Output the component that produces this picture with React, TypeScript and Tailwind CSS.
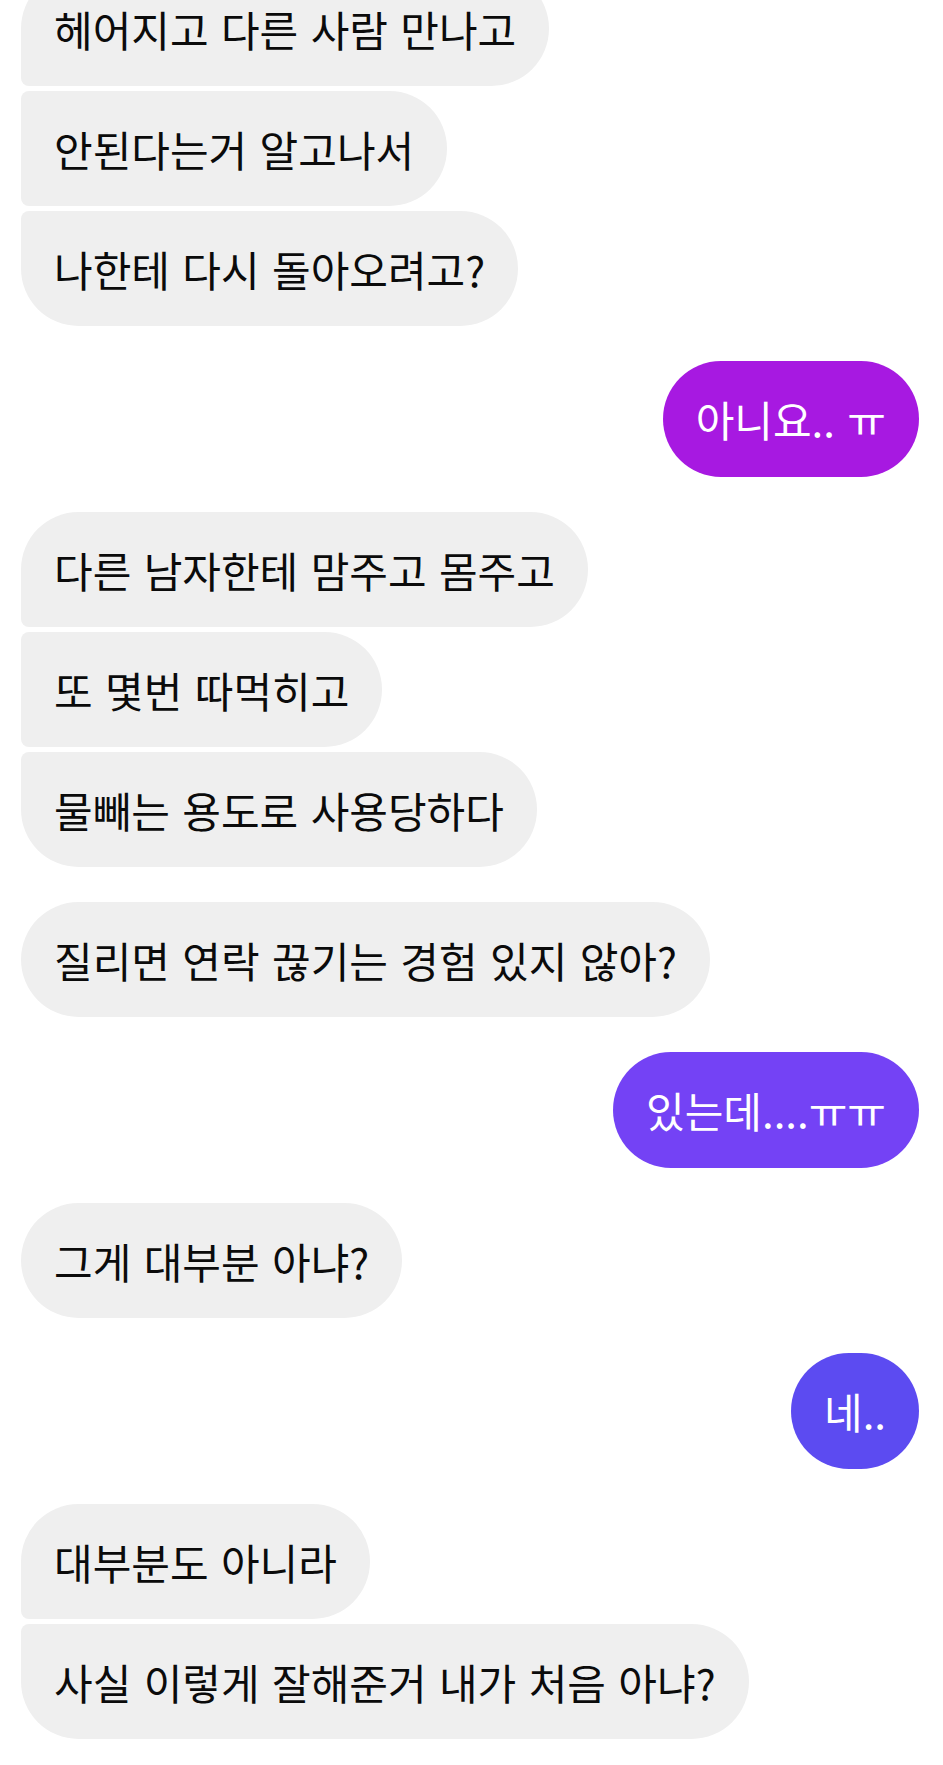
type Pos = "first" | "middle" | "last" | "single";

type Msg = { text: string; mine?: boolean; pos?: Pos; tone?: string };

const messages: Msg[][] = [
  [
    { text: "헤어지고 다른 사람 만나고", pos: "first" },
    { text: "안된다는거 알고나서", pos: "middle" },
    { text: "나한테 다시 돌아오려고?", pos: "last" },
  ],
  [{ text: "아니요.. ㅠ", mine: true, tone: "bg-[#a719e1]" }],
  [
    { text: "다른 남자한테 맘주고 몸주고", pos: "first" },
    { text: "또 몇번 따먹히고", pos: "middle" },
    { text: "물빼는 용도로 사용당하다", pos: "last" },
  ],
  [{ text: "질리면 연락 끊기는 경험 있지 않아?", pos: "single" }],
  [{ text: "있는데....ㅠㅠ", mine: true, tone: "bg-[#7442f5]" }],
  [{ text: "그게 대부분 아냐?", pos: "single" }],
  [{ text: "네..", mine: true, tone: "bg-[#5c4bf1]" }],
  [
    { text: "대부분도 아니라", pos: "first" },
    { text: "사실 이렇게 잘해준거 내가 처음 아냐?", pos: "last" },
  ],
];

const corners: Record<Pos, string> = {
  first: "rounded-tl-[58px] rounded-bl-[8px]",
  middle: "rounded-tl-[8px] rounded-bl-[8px]",
  last: "rounded-tl-[8px] rounded-bl-[58px]",
  single: "rounded-tl-[58px] rounded-bl-[58px]",
};

function Bubble({ m }: { m: Msg }) {
  if (m.mine) {
    return (
      <div className="flex justify-end">
        <div className={`h-[116px] min-w-[128px] flex items-center justify-center rounded-full px-[33px] text-white ${m.tone}`}>
          <span>{m.text}</span>
        </div>
      </div>
    );
  }
  return (
    <div className="flex justify-start">
      <div className={`h-[115px] flex items-center bg-[#efefef] px-[33px] text-[#0b0b0b] rounded-tr-[58px] rounded-br-[58px] ${corners[m.pos ?? "single"]}`}>
        <span>{m.text}</span>
      </div>
    </div>
  );
}

export default function App() {
  return (
    <div className="min-h-screen bg-white overflow-hidden">
      <div
        className="-mt-[29px] pl-[21px] pr-[24px] pb-[29px] flex flex-col gap-[35px] text-[42px] leading-none [word-spacing:3px]"
        style={{ fontFamily: '"Noto Sans CJK KR", "Noto Sans", sans-serif' }}
      >
        {messages.map((group, gi) => (
          <div key={gi} className="flex flex-col gap-[5px]">
            {group.map((m, i) => (
              <Bubble key={i} m={m} />
            ))}
          </div>
        ))}
      </div>
    </div>
  );
}
